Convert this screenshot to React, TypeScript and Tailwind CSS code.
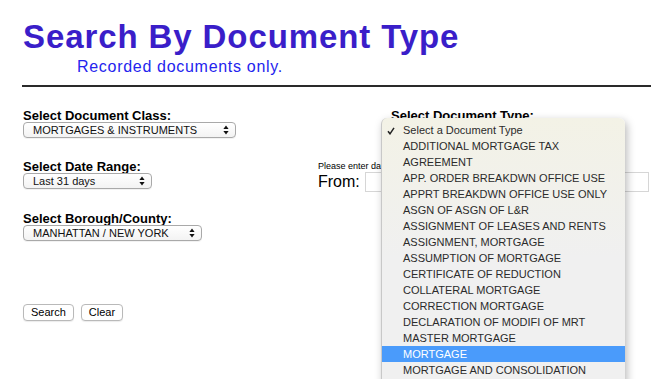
import { useState } from "react"

const docTypes = [
    "Select a Document Type",
    "ADDITIONAL MORTGAGE TAX",
    "AGREEMENT",
    "APP. ORDER BREAKDWN OFFICE USE",
    "APPRT BREAKDWN OFFICE USE ONLY",
    "ASGN OF ASGN OF L&R",
    "ASSIGNMENT OF LEASES AND RENTS",
    "ASSIGNMENT, MORTGAGE",
    "ASSUMPTION OF MORTGAGE",
    "CERTIFICATE OF REDUCTION",
    "COLLATERAL MORTGAGE",
    "CORRECTION MORTGAGE",
    "DECLARATION OF MODIFI OF MRT",
    "MASTER MORTGAGE",
    "MORTGAGE",
    "MORTGAGE AND CONSOLIDATION",
    "MORTGAGE SPREADER AGREEMENT",
]

const Arrows = () => (
    <svg width="6" height="10" viewBox="0 0 6 10" className="shrink-0">
        <path d="M3 0.5 L5.6 4 L0.4 4 Z" fill="#111" />
        <path d="M3 9.5 L5.6 6 L0.4 6 Z" fill="#111" />
    </svg>
)

const FakeSelect = ({ text, width }: { text: string, width: string }) => (
    <div className={`${width} h-[16px] flex items-center justify-between pl-[9px] pr-[6px] rounded-[4px] border border-[#a9a9a9] bg-gradient-to-b from-white to-[#f3f3f3] shadow-[0_1px_0_rgba(0,0,0,0.05)]`}>
        <span className="text-[11px] leading-none text-[#111]">{text}</span>
        <Arrows />
    </div>
)

const App = () => {

    const [selected] = useState<number>(0)
    const hovered = 14

    return (
        <div className="w-[651px] h-[379px] overflow-hidden bg-white font-['Liberation_Sans',Arial,sans-serif] text-black">
            <h1 className="ml-[23px] mt-[20px] text-[33px] leading-[33px] font-bold tracking-[0.9px] text-[#3a1ec9] whitespace-nowrap">
                Search By Document Type
            </h1>
            <p className="ml-[77px] mt-[6px] text-[16px] leading-[16px] tracking-[0.7px] text-[#2424ee]">
                Recorded documents only.
            </p>
            <div className="ml-[22px] mt-[10px] h-[2px] bg-[#2a2a2a]" />

            <div className="flex pl-[23px]">
                <div className="w-[295px] shrink-0 flex flex-col items-start">
                    <label className="mt-[22px] text-[13px] leading-[13px] font-bold">Select Document Class:</label>
                    <FakeSelect text="MORTGAGES & INSTRUMENTS" width="w-[213px]" />

                    <label className="mt-[22px] text-[13px] leading-[13px] font-bold">Select Date Range:</label>
                    <FakeSelect text="Last 31 days" width="w-[129px]" />

                    <label className="mt-[23px] text-[13px] leading-[13px] font-bold">Select Borough/County:</label>
                    <FakeSelect text="MANHATTAN / NEW YORK" width="w-[179px]" />

                    <div className="mt-[63px] flex gap-[7px]">
                        <button className="h-[17px] px-[7px] rounded-[4px] border border-[#b9b9b9] bg-white text-[11px] leading-none shadow-[0_1px_1px_rgba(0,0,0,0.08)]">Search</button>
                        <button className="h-[17px] px-[7px] rounded-[4px] border border-[#b9b9b9] bg-white text-[11px] leading-none shadow-[0_1px_1px_rgba(0,0,0,0.08)]">Clear</button>
                    </div>
                </div>

                <div className="relative flex-1 flex flex-col items-start">
                    <label className="ml-[73px] mt-[22px] text-[13px] leading-[13px] font-bold">Select Document Type:</label>
                    <div className="ml-[73px]">
                        <FakeSelect text={docTypes[selected]} width="w-[190px]" />
                    </div>

                    <p className="mt-[24px] text-[9px] leading-[9px]">Please enter dates in MM/DD/YYYY format</p>
                    <div className="mt-[1px] flex items-center gap-[5px]">
                        <span className="text-[16px] leading-[16px]">From:</span>
                        <div className="w-[284px] h-[20px] border border-[#d6d6d6] bg-white" />
                    </div>

                    <div className="absolute left-[63px] top-[31px] w-[244px] pt-[4px] pb-[4px] rounded-[6px] border-l border-[#c8c8c8] bg-gradient-to-b from-[#f3f2e6] via-[#f0f0f0] to-[#f0f0f0] shadow-[2px_3px_8px_rgba(0,0,0,0.28)] z-10">
                        {docTypes.map((item, index) => (
                            <div
                                key={index}
                                className={`relative h-[16px] pl-[21px] text-[11px] leading-[16px] whitespace-nowrap ${index === hovered ? "bg-[#4a9bfb] text-white" : "text-[#2b2b2b]"}`}
                            >
                                {index === selected && (
                                    <svg width="8" height="8" viewBox="0 0 8 8" className="absolute left-[5px] top-[5px]">
                                        <path d="M1 4.2 L3 6.8 L7 0.8" stroke="#222" strokeWidth="1.5" fill="none" />
                                    </svg>
                                )}
                                {item}
                            </div>
                        ))}
                    </div>
                </div>
            </div>
        </div>
    )
}

export default App
